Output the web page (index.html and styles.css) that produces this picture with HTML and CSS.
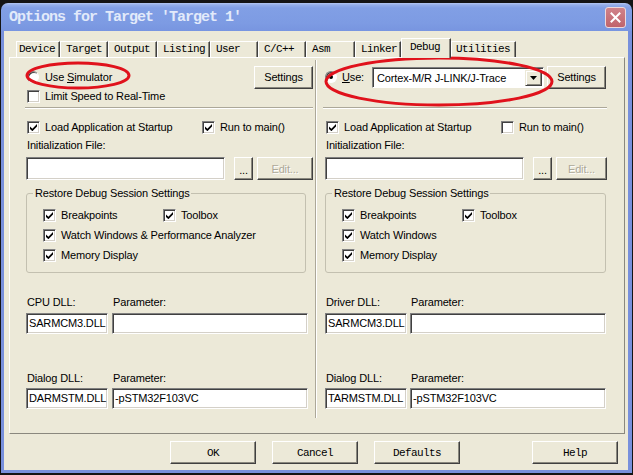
FILE: index.html
```html
<!DOCTYPE html>
<html>
<head>
<meta charset="utf-8">
<title>Options for Target 'Target 1'</title>
<link rel="stylesheet" href="styles.css">
</head>
<body>
<div class="screen">
  <div class="win">
    <div class="titlebar">
      <span class="title">Options for Target 'Target 1'</span>
      <span class="close"><svg width="11" height="11" viewBox="0 0 11 11"><path d="M1.5 1.5 L9.5 9.5 M9.5 1.5 L1.5 9.5" stroke="#fff" stroke-width="2" stroke-linecap="square"/></svg></span>
    </div>
    <div class="frame">
      <div class="tabs">
        <span class="tab">Device</span>
        <span class="tab">Target</span>
        <span class="tab">Output</span>
        <span class="tab">Listing</span>
        <span class="tab">User</span>
        <span class="tab">C/C++</span>
        <span class="tab">Asm</span>
        <span class="tab">Linker</span>
        <span class="tab active">Debug</span>
        <span class="tab">Utilities</span>
      </div>
      <div class="panel">
        <div class="col col-left">
          <div class="row-top">
            <div class="opt"><span class="radio"></span><span>Use <u>S</u>imulator</span></div>
            <div class="btn settings">Settings</div>
          </div>
          <div class="check"><span class="cb"></span><span>Limit Speed to Real-Time</span></div>
          <div class="sep"></div>
          <div class="pair">
            <div class="check"><span class="cb"><svg class="tick" viewBox="0 0 7 7"><polygon points="0,2.4 2.4,4.7 7,0 7,2.6 2.4,7.2 0,4.9"/></svg></span><span>Load Application at Startup</span></div>
            <div class="check"><span class="cb"><svg class="tick" viewBox="0 0 7 7"><polygon points="0,2.4 2.4,4.7 7,0 7,2.6 2.4,7.2 0,4.9"/></svg></span><span>Run to main()</span></div>
          </div>
          <div class="label init-label">Initialization File:</div>
          <div class="file-row">
            <div class="field file"></div>
            <div class="btn dots">...</div>
            <div class="btn edit">Edit...</div>
          </div>
          <fieldset class="group">
            <legend>Restore Debug Session Settings</legend>
            <div class="group-grid">
              <div class="check"><span class="cb"><svg class="tick" viewBox="0 0 7 7"><polygon points="0,2.4 2.4,4.7 7,0 7,2.6 2.4,7.2 0,4.9"/></svg></span><span>Breakpoints</span></div>
              <div class="check"><span class="cb"><svg class="tick" viewBox="0 0 7 7"><polygon points="0,2.4 2.4,4.7 7,0 7,2.6 2.4,7.2 0,4.9"/></svg></span><span>Toolbox</span></div>
              <div class="check span2"><span class="cb"><svg class="tick" viewBox="0 0 7 7"><polygon points="0,2.4 2.4,4.7 7,0 7,2.6 2.4,7.2 0,4.9"/></svg></span><span>Watch Windows &amp; Performance Analyzer</span></div>
              <div class="check span2"><span class="cb"><svg class="tick" viewBox="0 0 7 7"><polygon points="0,2.4 2.4,4.7 7,0 7,2.6 2.4,7.2 0,4.9"/></svg></span><span>Memory Display</span></div>
            </div>
          </fieldset>
          <div class="dll dll-first">
            <div class="label">CPU DLL:</div>
            <div class="label">Parameter:</div>
            <div class="field">SARMCM3.DLL</div>
            <div class="field"></div>
          </div>
          <div class="dll dll-second">
            <div class="label">Dialog DLL:</div>
            <div class="label">Parameter:</div>
            <div class="field">DARMSTM.DLL</div>
            <div class="field">-pSTM32F103VC</div>
          </div>
        </div>
        <div class="divider"></div>
        <div class="col col-right">
          <div class="row-top">
            <div class="opt"><span class="radio on"></span><span><u>U</u>se:</span></div>
            <div class="combo">
              <span class="combo-text">Cortex-M/R J-LINK/J-Trace</span>
              <span class="combo-btn"><svg width="7" height="4" viewBox="0 0 7 4"><polygon points="0,0 7,0 3.5,4" fill="#000"/></svg></span>
            </div>
            <div class="btn settings">Settings</div>
          </div>
          <div class="spacer-limit"></div>
          <div class="sep"></div>
          <div class="pair">
            <div class="check"><span class="cb"><svg class="tick" viewBox="0 0 7 7"><polygon points="0,2.4 2.4,4.7 7,0 7,2.6 2.4,7.2 0,4.9"/></svg></span><span>Load Application at Startup</span></div>
            <div class="check"><span class="cb"></span><span>Run to main()</span></div>
          </div>
          <div class="label init-label">Initialization File:</div>
          <div class="file-row">
            <div class="field file"></div>
            <div class="btn dots">...</div>
            <div class="btn edit">Edit...</div>
          </div>
          <fieldset class="group">
            <legend>Restore Debug Session Settings</legend>
            <div class="group-grid">
              <div class="check"><span class="cb"><svg class="tick" viewBox="0 0 7 7"><polygon points="0,2.4 2.4,4.7 7,0 7,2.6 2.4,7.2 0,4.9"/></svg></span><span>Breakpoints</span></div>
              <div class="check"><span class="cb"><svg class="tick" viewBox="0 0 7 7"><polygon points="0,2.4 2.4,4.7 7,0 7,2.6 2.4,7.2 0,4.9"/></svg></span><span>Toolbox</span></div>
              <div class="check span2"><span class="cb"><svg class="tick" viewBox="0 0 7 7"><polygon points="0,2.4 2.4,4.7 7,0 7,2.6 2.4,7.2 0,4.9"/></svg></span><span>Watch Windows</span></div>
              <div class="check span2"><span class="cb"><svg class="tick" viewBox="0 0 7 7"><polygon points="0,2.4 2.4,4.7 7,0 7,2.6 2.4,7.2 0,4.9"/></svg></span><span>Memory Display</span></div>
            </div>
          </fieldset>
          <div class="dll dll-first">
            <div class="label">Driver DLL:</div>
            <div class="label">Parameter:</div>
            <div class="field">SARMCM3.DLL</div>
            <div class="field"></div>
          </div>
          <div class="dll dll-second">
            <div class="label">Dialog DLL:</div>
            <div class="label">Parameter:</div>
            <div class="field">TARMSTM.DLL</div>
            <div class="field">-pSTM32F103VC</div>
          </div>
        </div>
      </div>
      <div class="actions">
        <div class="btn cmd">OK</div>
        <div class="btn cmd">Cancel</div>
        <div class="btn cmd">Defaults</div>
        <div class="btn cmd help">Help</div>
      </div>
    </div>
  </div>
  <svg class="mark mark-left" width="106" height="29" viewBox="0 0 106 29"><ellipse cx="53" cy="14.5" rx="51" ry="12.5" fill="none" stroke="#e0121c" stroke-width="3"/></svg>
  <svg class="mark mark-right" width="230" height="51" viewBox="0 0 230 51"><ellipse cx="115" cy="25.5" rx="113" ry="23.5" fill="none" stroke="#e0121c" stroke-width="3"/></svg>
</div>
</body>
</html>
```

FILE: styles.css
```css
body {
  margin: 0;
  background: #141414;
}

.screen {
  position: relative;
  width: 633px;
  height: 475px;
  overflow: hidden;
  font-family: "Liberation Sans", Arial, sans-serif;
  font-size: 11px;
  letter-spacing: -0.15px;
  color: #000;
}

.win {
  margin: 3px 1px 0 1px;
  width: 631px;
}

.titlebar {
  height: 28px;
  box-sizing: border-box;
  display: flex;
  align-items: center;
  justify-content: space-between;
  padding: 0 6px 0 8px;
  border-radius: 7px 7px 0 0;
  background: linear-gradient(#b3c6f2 0, #93ade9 2px, #819fe5 5px, #7d9be3 20px, #7895e0 28px);
}

.title {
  font-family: "Liberation Mono", "DejaVu Sans Mono", monospace;
  font-weight: bold;
  font-size: 15px;
  letter-spacing: -1px;
  color: #e2eafa;
  margin-top: 1px;
}

.close {
  width: 21px;
  height: 21px;
  box-sizing: border-box;
  border: 1px solid #eed9dc;
  border-radius: 3px;
  background: linear-gradient(#d0838a, #c0646c);
  display: flex;
  align-items: center;
  justify-content: center;
  margin-top: 1px;
}

.frame {
  height: 439px;
  background: #ece9d8;
  border-style: solid;
  border-color: #7890dc;
  border-width: 0 4px 3px 3px;
}

/* tabs */
.tabs {
  display: flex;
  align-items: flex-end;
  height: 19px;
  padding: 7px 0 0 12px;
}

.tab {
  height: 16px;
  box-sizing: border-box;
  border-left: 1px solid #fff;
  border-top: 1px solid #fff;
  border-right: 1px solid #404040;
  box-shadow: inset -1px 0 #8a887e;
  padding-left: 5px;
  font-family: "Liberation Mono", "DejaVu Sans Mono", monospace;
  font-size: 11px;
  letter-spacing: -0.6px;
  line-height: 15px;
  white-space: nowrap;
}

.tab:nth-child(1) { width: 44px; padding-left: 2px; }
.tab:nth-child(2) { width: 48px; }
.tab:nth-child(3) { width: 49px; }
.tab:nth-child(4) { width: 53px; }
.tab:nth-child(5) { width: 48px; }
.tab:nth-child(6) { width: 48px; }
.tab:nth-child(7) { width: 49px; }
.tab:nth-child(8) { width: 46px; }
.tab:nth-child(9) { width: 50px; padding-left: 8px; }
.tab:nth-child(10) { width: 65px; padding-left: 4px; }

.tab.active {
  height: 20px;
  margin-bottom: -1px;
  position: relative;
  z-index: 1;
  background: #ece9d8;
  line-height: 16px;
}

/* panel */
.panel {
  margin-left: 5px;
  width: 616px;
  height: 377px;
  box-sizing: border-box;
  border: 1px solid;
  border-color: #fff #8a887e #8a887e #fff;
  display: flex;
}

.col {
  box-sizing: border-box;
}

.col-left {
  width: 305px;
  padding: 0 2px 0 16px;
}

.col-right {
  flex: 1;
  padding: 0 17px 0 8px;
}

.divider {
  width: 0;
  border-left: 1px solid #aca899;
  border-right: 1px solid #fff;
  margin: 2px 0 15px;
}

.row-top {
  display: flex;
  align-items: center;
  height: 24px;
  margin-top: 7px;
}

.opt {
  display: flex;
  align-items: center;
  gap: 6px;
}

.col-right .opt {
  gap: 5px;
}

.radio {
  width: 12px;
  height: 12px;
  margin-left: 1px;
  box-sizing: border-box;
  border-radius: 50%;
  background: #fff;
  border: 1px solid;
  border-color: #808080 #fff #fff #808080;
  box-shadow: inset 1px 1px #404040;
  display: flex;
  align-items: center;
  justify-content: center;
}

.col-right .radio {
  margin-left: 0;
}

.radio.on::after {
  content: "";
  width: 4px;
  height: 4px;
  border-radius: 50%;
  background: #000;
}

.btn {
  height: 23px;
  box-sizing: border-box;
  border: 1px solid;
  border-color: #fff #404040 #404040 #fff;
  box-shadow: inset -1px -1px #8a887e;
  background: #ece9d8;
  display: flex;
  align-items: center;
  justify-content: center;
  white-space: nowrap;
}

.settings {
  width: 59px;
  margin-left: auto;
}

.col-right .settings {
  margin-right: 1px;
}

.combo {
  width: 172px;
  height: 21px;
  margin-left: 8px;
  box-sizing: border-box;
  border: 1px solid;
  border-color: #808080 #fff #fff #808080;
  box-shadow: inset 1px 1px #404040;
  background: #fff;
  display: flex;
  padding: 2px 1px 1px 2px;
}

.combo-text {
  flex: 1;
  padding-left: 2px;
  line-height: 16px;
  white-space: nowrap;
}

.combo-btn {
  width: 17px;
  box-sizing: border-box;
  border: 1px solid;
  border-color: #ece9d8 #404040 #404040 #ece9d8;
  box-shadow: inset 1px 1px #fff, inset -1px -1px #8a887e;
  background: #ece9d8;
  display: flex;
  align-items: center;
  justify-content: center;
}

.check {
  display: flex;
  align-items: center;
  gap: 5px;
  height: 14px;
  white-space: nowrap;
}

.cb {
  width: 13px;
  height: 13px;
  margin-left: 1px;
  flex: none;
  box-sizing: border-box;
  background: #fff;
  border: 1px solid;
  border-color: #808080 #fff #fff #808080;
  box-shadow: inset 1px 1px #404040, inset -1px -1px #d4d0c8;
  display: flex;
  align-items: center;
  justify-content: center;
}

.tick {
  width: 7px;
  height: 7px;
  fill: #000;
}

.spacer-limit {
  height: 14px;
}

.sep {
  height: 0;
  margin: 4px 0 0 -1px;
  border-top: 1px solid #aca899;
  border-bottom: 1px solid #fff;
}

.col-right .sep {
  margin-left: -2px;
}

.pair {
  display: grid;
  grid-template-columns: 175px auto;
  margin-top: 11px;
}

.label {
  height: 13px;
  line-height: 13px;
  padding-left: 1px;
  white-space: nowrap;
}

.init-label {
  margin-top: 5px;
}

.file-row {
  display: flex;
  margin-top: 5px;
  height: 23px;
}

.field {
  height: 21px;
  box-sizing: border-box;
  border: 1px solid;
  border-color: #808080 #fff #fff #808080;
  box-shadow: inset 1px 1px #404040, inset -1px -1px #d4d0c8;
  background: #fff;
  padding: 0 2px;
  line-height: 19px;
  white-space: nowrap;
  overflow: hidden;
}

.field.file {
  width: 199px;
  height: 23px;
}

.dots {
  width: 19px;
  margin-left: 9px;
  align-items: flex-end;
  padding-bottom: 4px;
  line-height: 10px;
}

.edit {
  flex: 1;
  margin-left: 4px;
  color: #aca899;
  text-shadow: 1px 1px #fff;
}

.group {
  margin: 7px 0 0 0;
  padding: 8px 0 10px 15px;
  border: 1px solid #c3c0b0;
  border-radius: 3px;
  min-width: 0;
}

.col-left .group {
  margin-right: 7px;
}

.col-right .group {
  margin-right: 1px;
}

.group legend {
  padding: 0 2px;
  margin-left: -9px;
  line-height: 13px;
}

.group-grid {
  display: grid;
  grid-template-columns: 120px auto;
  row-gap: 6px;
}

.span2 {
  grid-column: 1 / 3;
}

.dll {
  display: grid;
  grid-template-columns: 82px 1fr;
  column-gap: 4px;
}

.col-left .dll {
  margin-right: 5px;
}

.col-right .dll {
  column-gap: 3px;
  margin-right: 1px;
}

.dll-first {
  margin-top: 23px;
  row-gap: 4px;
}

.dll-second {
  margin-top: 38px;
  row-gap: 3px;
}

/* bottom buttons */
.actions {
  display: flex;
  gap: 16px;
  margin-top: 7px;
  padding: 0 10px 0 166px;
}

.cmd {
  width: 86px;
  font-family: "Liberation Mono", "DejaVu Sans Mono", monospace;
  font-size: 11px;
  letter-spacing: -0.6px;
}

.help {
  margin-left: auto;
}

/* red annotation ellipses */
.mark {
  position: absolute;
  pointer-events: none;
}

.mark-left {
  left: 25px;
  top: 61px;
}

.mark-right {
  left: 324px;
  top: 56px;
}
```
